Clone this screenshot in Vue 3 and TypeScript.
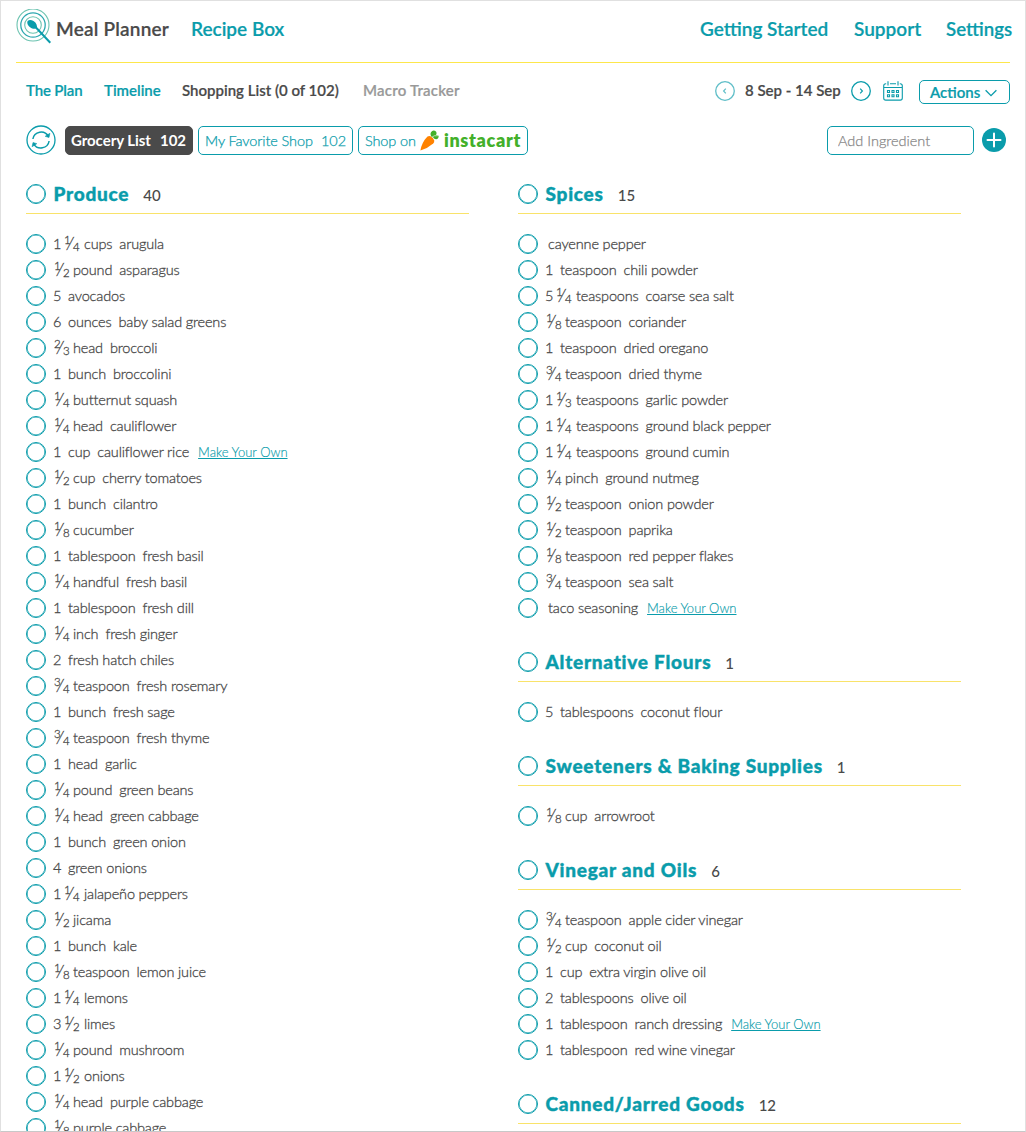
<script setup lang="ts">
interface Item {
  whole?: string
  frac?: [string, string]
  unit?: string
  name: string
  link?: boolean
}
interface Section {
  title: string
  count: number
  items: Item[]
}

// "1 1/4|cups|arugula" -> quantity, unit, ingredient; a trailing * adds the recipe link
function parse(line: string): Item {
  const [qty, unit, rawName] = line.split('|')
  const item: Item = { unit, name: rawName.replace('*', ''), link: rawName.endsWith('*') }
  for (const part of qty.split(' ')) {
    if (part.includes('/')) item.frac = part.split('/') as [string, string]
    else if (part) item.whole = part
  }
  return item
}

const produce: Section = {
  title: 'Produce',
  count: 40,
  items: [
    '1 1/4|cups|arugula', '1/2|pound|asparagus', '5||avocados', '6|ounces|baby salad greens',
    '2/3|head|broccoli', '1|bunch|broccolini', '1/4||butternut squash', '1/4|head|cauliflower',
    '1|cup|cauliflower rice*', '1/2|cup|cherry tomatoes', '1|bunch|cilantro', '1/8||cucumber',
    '1|tablespoon|fresh basil', '1/4|handful|fresh basil', '1|tablespoon|fresh dill',
    '1/4|inch|fresh ginger', '2||fresh hatch chiles', '3/4|teaspoon|fresh rosemary',
    '1|bunch|fresh sage', '3/4|teaspoon|fresh thyme', '1|head|garlic', '1/4|pound|green beans',
    '1/4|head|green cabbage', '1|bunch|green onion', '4||green onions', '1 1/4||jalapeño peppers',
    '1/2||jicama', '1|bunch|kale', '1/8|teaspoon|lemon juice', '1 1/4||lemons', '3 1/2||limes',
    '1/4|pound|mushroom', '1 1/2||onions', '1/4|head|purple cabbage', '1/8||purple cabbage',
  ].map(parse),
}

const others: Section[] = [
  {
    title: 'Spices',
    count: 15,
    items: [
      '||cayenne pepper', '1|teaspoon|chili powder', '5 1/4|teaspoons|coarse sea salt',
      '1/8|teaspoon|coriander', '1|teaspoon|dried oregano', '3/4|teaspoon|dried thyme',
      '1 1/3|teaspoons|garlic powder', '1 1/4|teaspoons|ground black pepper',
      '1 1/4|teaspoons|ground cumin', '1/4|pinch|ground nutmeg', '1/2|teaspoon|onion powder',
      '1/2|teaspoon|paprika', '1/8|teaspoon|red pepper flakes', '3/4|teaspoon|sea salt',
      '||taco seasoning*',
    ].map(parse),
  },
  { title: 'Alternative Flours', count: 1, items: ['5|tablespoons|coconut flour'].map(parse) },
  { title: 'Sweeteners & Baking Supplies', count: 1, items: ['1/8|cup|arrowroot'].map(parse) },
  {
    title: 'Vinegar and Oils',
    count: 6,
    items: [
      '3/4|teaspoon|apple cider vinegar', '1/2|cup|coconut oil', '1|cup|extra virgin olive oil',
      '2|tablespoons|olive oil', '1|tablespoon|ranch dressing*', '1|tablespoon|red wine vinegar',
    ].map(parse),
  },
  { title: 'Canned/Jarred Goods', count: 12, items: [] },
]

const columns: Section[][] = [[produce], others]
</script>

<template>
  <div class="page">
    <header class="top">
      <svg class="logo" width="36" height="37" viewBox="0 0 36 37" fill="none">
        <circle cx="17" cy="16" r="16" stroke="#6cc3b0" stroke-width="1.1" />
        <circle cx="17" cy="16" r="12.2" stroke="#2fa9b0" stroke-width="1.3" />
        <circle cx="17" cy="16" r="8.300" stroke="#6cc3b0" stroke-width="1.1" />
        <path d="M11.300 14C10.700 10.700 14.700 10.200 17.500 12C20.500 13.900 21.500 17 20.800 19.300C18 20.500 12.300 19.200 11.300 14Z" fill="#0a9cab" />
        <path d="M19 17.500L34.300 33.800" stroke="#0a9cab" stroke-width="2" />
      </svg>
      <a class="brand">Meal Planner</a>
      <a class="recipe">Recipe Box</a>
      <nav class="right">
        <a class="started">Getting Started</a>
        <a class="support">Support</a>
        <a class="settings">Settings</a>
      </nav>
    </header>

    <div class="tabs">
      <a class="plan">The Plan</a>
      <a class="timeline">Timeline</a>
      <a class="shopping">Shopping List (0 of 102)</a>
      <a class="macro">Macro Tracker</a>
      <div class="dates">
        <svg class="dim" width="20" height="20" viewBox="0 0 20 20" fill="none" stroke="#0a9cab">
          <circle cx="10" cy="10" r="9.300" stroke-width="1.300" />
          <path d="M10.800 7.600L8.600 10L10.800 12.400" stroke-width="1.200" />
        </svg>
        <span class="range">8 Sep - 14 Sep</span>
        <svg width="20" height="20" viewBox="0 0 20 20" fill="none" stroke="#0a9cab">
          <circle cx="10" cy="10" r="9.300" stroke-width="1.300" />
          <path d="M9.200 7.600L11.400 10L9.200 12.400" stroke-width="1.200" />
        </svg>
        <svg class="cal" width="20" height="20" viewBox="0 0 20 20" fill="none" stroke="#0a9cab">
          <path d="M3.200 2.700H2.800Q.700 2.700 .7 4.800V17Q.7 19.100 2.800 19.100H17.200Q19.300 19.100 19.300 17V4.800Q19.300 2.700 17.200 2.700H16.800M7 2.700H13M5 .2V4.500M15 .2V4.500M.7 6.500H19.300" stroke-width="1.100" />
          <path d="M4.500 9.500h2v2h-2zM9 9.500h2v2h-2zM13.500 9.500h2v2h-2zM4.500 13.800h2v2h-2zM9 13.800h2v2h-2zM13.500 13.800h2v2h-2z" stroke-width="1.1" />
        </svg>
        <button class="actions">
          <span>Actions</span>
          <svg width="12" height="8" viewBox="0 0 12 8" fill="none" stroke="#0a9cab" stroke-width="1.300"><path d="M.6 1.300L6 6.700L11.400 1.300" /></svg>
        </button>
      </div>
    </div>

    <div class="tools">
      <svg class="refresh" width="30" height="30" viewBox="0 0 30 30" fill="none" stroke="#0a9cab" stroke-width="1.300">
        <circle cx="15" cy="15" r="14" />
        <path d="M6.900 14A8.300 8.300 0 0 1 22.300 11.200M23.100 16A8.300 8.300 0 0 1 7.700 18.800" stroke-width="1.500" />
        <path d="M23.900 8.300L23 12.500L19.200 11.300ZM6.100 21.700L7 17.500L10.800 18.700Z" fill="#0a9cab" stroke-width=".6" />
      </svg>
      <button class="list on"><span>Grocery List</span><span>102</span></button>
      <button class="list fav"><span>My Favorite Shop</span><span>102</span></button>
      <button class="list cart">
        <span>Shop on</span>
        <svg width="19" height="21" viewBox="0 0 19 21">
          <path d="M7.500 6.500Q9 5.500 10.500 6.200Q13.500 7.700 14.200 10.500Q14.500 12.300 13.200 13.500Q8 18.200 .4 20.500Q1.800 12.200 7.500 6.500Z" fill="#ff8200" />
          <path d="M11.500 6.800Q9.800 4.300 11 2.200Q12.500-.3 15 .7Q17.500 2 16 5Q18.700 4.400 18.700 6.800Q18.300 9.500 16 9.200Q14 9 13.300 7.500Z" fill="#43b02a" />
          <path d="M11.900 7.200L14.300 5.800L18 5.700" fill="none" stroke="#fff" stroke-width=".6" />
        </svg>
        <b class="insta">instacart</b>
      </button>
      <input class="add" placeholder="Add Ingredient" />
      <svg class="plus" width="24" height="24" viewBox="0 0 24 24">
        <circle cx="12" cy="12" r="12" fill="#0a9cab" />
        <path d="M12 5.500V18.500M5.500 12H18.500" stroke="#fff" stroke-width="2" stroke-linecap="round" />
      </svg>
    </div>

    <main class="columns">
      <div v-for="(col, c) in columns" :key="c" class="column">
        <section v-for="s in col" :key="s.title">
          <h2>
            <i class="ring"></i>
            <span class="title">{{ s.title }}</span>
            <span class="count">{{ s.count }}</span>
          </h2>
          <ul>
            <li v-for="(it, i) in s.items" :key="i">
              <i class="ring"></i>
              <span v-if="it.whole" class="whole" :class="{ mixed: it.frac }">{{ it.whole }}</span>
              <span v-if="it.frac" class="frac"><span class="num">{{ it.frac[0] }}</span><span class="bar">⁄</span><span class="den">{{ it.frac[1] }}</span></span>
              <span v-if="!it.whole && !it.frac" class="none"></span>
              <span v-if="it.unit" class="unit">{{ it.unit }}</span>
              <span class="name">{{ it.name }}</span>
              <a v-if="it.link" class="own">Make Your Own</a>
            </li>
          </ul>
        </section>
      </div>
    </main>
  </div>
</template>

<style>
body { margin: 0; background: #fff; overflow: hidden; }
</style>

<style scoped>
.page {
  box-sizing: border-box;
  width: 1026px;
  height: 1132px;
  overflow: hidden;
  border: 1px solid #e0e0e0;
  border-bottom-color: #c8c8c8;
  font-family: Lato, "Open Sans", sans-serif;
  color: #4a4a4a;
  background: #fff;
}
svg { display: block; flex: none; }
a, span, b { white-space: nowrap; }
.top {
  display: flex;
  height: 61px;
  margin: 0 13px 0 15px;
  box-sizing: border-box;
  padding-top: 8px;
  font-size: 19px;
  font-weight: 600;
  line-height: 40px;
  -webkit-text-stroke: .2px;
  color: #0a9cab;
  position: relative;
}
.top::after {
  content: "";
  position: absolute;
  left: 0;
  right: 2px;
  bottom: -1px;
  height: 1px;
  background: #fde74c;
}
.brand { color: #4a4a4a; margin-left: 4px; width: 135px; letter-spacing: .2px; }
.right { display: flex; margin-left: auto; }
.started { width: 154px; }
.support { width: 92px; }
.settings { width: 66px; font-size: 18.700px; }
.tabs {
  display: flex;
  align-items: center;
  height: 30px;
  margin: 14px 15px 0 25px;
  font-size: 15px;
  font-weight: 600;
  -webkit-text-stroke: .2px;
  color: #0a9cab;
}
.tabs > a, .range { position: relative; top: -1px; }
.plan { width: 78px; letter-spacing: -.15px; }
.timeline { width: 78px; }
.shopping { width: 181px; color: #4a4a4a; }
.macro { color: #999; letter-spacing: .2px; }
.dates { display: flex; align-items: center; margin-left: auto; }
.dim { opacity: .65; }
.range { color: #4a4a4a; width: 97px; margin: 0 9px 0 10px; }
.cal { margin: 0 16px 0 12px; }
button { font-family: inherit; background: #fff; cursor: pointer; }
.actions {
  display: flex;
  align-items: center;
  justify-content: space-between;
  width: 91px;
  height: 24px;
  margin-top: 2px;
  padding: 0 12px 1px 10px;
  border: 1px solid #0a9cab;
  border-radius: 5px;
  font-size: 15px;
  font-weight: 600;
  color: #0a9cab;
  -webkit-text-stroke: .2px;
}
.actions svg { margin-top: 3px; }
.tools { display: flex; align-items: center; height: 30px; margin: 19px 19px 0 25px; }
.list {
  display: flex;
  align-items: center;
  justify-content: space-between;
  box-sizing: border-box;
  height: 29px;
  padding: 0 6px;
  border: 1px solid #0a9cab;
  border-radius: 5px;
  color: #0a9cab;
  font-size: 14.500px;
  font-weight: 300;
  -webkit-text-stroke: .25px;
}
.on { width: 128px; margin-left: 9px; background: #4a4a4a; border-color: #4a4a4a; color: #fff; font-size: 15px; font-weight: 700; padding: 0 6px 0 5px; letter-spacing: -.05px; -webkit-text-stroke: 0; }
.fav { width: 155px; margin-left: 5px; letter-spacing: -.1px; }
.cart { width: 170px; margin-left: 5px; letter-spacing: -.1px; }
.insta { color: #43b02a; font-size: 18px; font-weight: 800; letter-spacing: .65px; line-height: 20px; -webkit-text-stroke: 0; }
.add {
  box-sizing: border-box;
  width: 147px;
  height: 29px;
  margin-left: auto;
  padding: 0 10px;
  border: 1px solid #0a9cab;
  border-radius: 5px;
  font: 300 14.500px Lato, sans-serif;
  -webkit-text-stroke: .25px;
}
.add::placeholder { color: #888; }
.plus { margin-left: 8px; }
.columns { display: flex; gap: 49px; margin: 29px 0 0 25px; }
.column { width: 443px; }
.ring {
  box-sizing: border-box;
  flex: none;
  width: 20px;
  height: 20px;
  border: 1px solid #0a9cab;
  border-radius: 50%;
  box-shadow: inset 0 0 0 .6px #0a9cab;
}
h2 {
  display: flex;
  box-sizing: border-box;
  height: 30px;
  margin: 0;
  border-bottom: 1px solid #f9e36a;
  line-height: 20px;
}
.title { margin-left: 7.500px; font-size: 19px; font-weight: 900; letter-spacing: .75px; -webkit-text-stroke: .4px; color: #0a9cab; }
.count { margin-left: 14px; font-size: 15px; font-weight: 500; line-height: 22px; }
ul { list-style: none; margin: 0 0 31px; padding: 17px 0 0; }
li { display: flex; align-items: center; height: 26px; font-size: 14.500px; font-weight: 300; letter-spacing: -.16px; line-height: 20px; -webkit-text-stroke: .3px; }
.whole { width: 15px; margin-left: 7px; }
.mixed { width: 11px; }
.frac { display: flex; width: 19px; margin-left: 8px; font-size: 11.500px; }
.whole + .frac { margin-left: 0; width: 20px; }
.num { position: relative; top: -4px; width: 5px; }
.bar { width: 4px; font-size: 17px; }
.den { position: relative; top: 3px; }
.none { width: 10px; }
.unit { margin-right: 7px; }
.own { margin-left: 9px; font-size: 13px; color: #0a9cab; text-decoration: underline; -webkit-text-stroke: .15px; letter-spacing: 0; }
</style>
